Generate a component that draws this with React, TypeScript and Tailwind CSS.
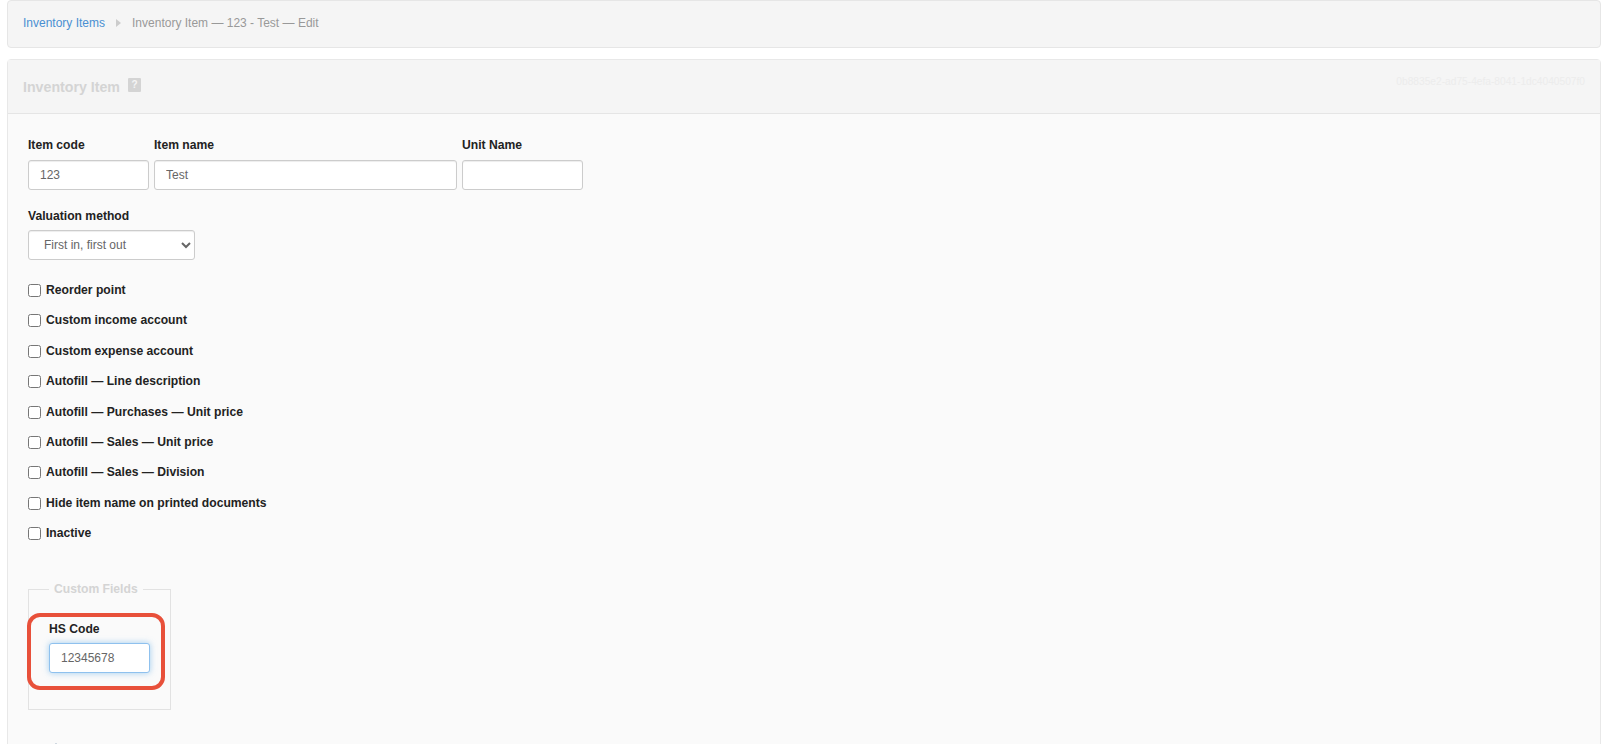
import React from "react";

const checks = [
  "Reorder point",
  "Custom income account",
  "Custom expense account",
  "Autofill — Line description",
  "Autofill — Purchases — Unit price",
  "Autofill — Sales — Unit price",
  "Autofill — Sales — Division",
  "Hide item name on printed documents",
  "Inactive",
];

const inputCls = "h-[30px] rounded-[3px] border bg-white px-[11px] text-[12px] text-[#666] outline-none";
const idleCls = "border-[#ccc] shadow-[inset_0_1px_1px_rgba(0,0,0,0.075)]";
const labelCls = "text-[12.15px] leading-[15px] font-bold text-[#222]";

const Field: React.FC<{ label: string; value: string; width: string }> = ({ label, value, width }) => (
  <div className={`flex flex-col ${width}`}>
    <label className={`mb-[7px] ${labelCls}`}>{label}</label>
    <input readOnly value={value} className={`${inputCls} ${idleCls} w-full`} />
  </div>
);

export default function App() {
  return (
    <div className="h-[744px] overflow-hidden bg-white pr-[18px] pl-[7px] font-['Liberation_Sans',Arial,sans-serif]">
      {/* Breadcrumb */}
      <div className="flex h-[48px] items-center rounded-[4px] border border-[#e6e6e6] bg-[#f5f5f5] pb-[2px] pl-[15px] text-[12px]">
        <a className="text-[#4a90d2]">Inventory Items</a>
        <span className="mx-[11px] h-0 w-0 border-y-[4px] border-l-[5px] border-y-transparent border-l-[#ccc]" />
        <span className="text-[#999]">Inventory Item — 123 - Test — Edit</span>
      </div>

      {/* Panel */}
      <div className="mt-[11px] h-[800px] rounded-t-[4px] border border-[#e8e8e8] bg-[#fafafa]">
        <div className="flex h-[54px] items-center justify-between border-b border-[#e5e5e5] bg-[#f5f5f5] px-[15px] pt-[2px]">
          <div className="flex items-center gap-[8px]">
            <span className="text-[14.2px] font-bold text-[#d4d4d4]">Inventory Item</span>
            <span className="mb-[5px] flex h-[14px] w-[13px] items-center justify-center rounded-[1px] bg-[#d4d4d4] text-[10px] leading-none font-bold text-[#f5f5f5]">
              ?
            </span>
          </div>
          <span className="mb-[11px] text-[10.2px] text-[#ececec]">0b8835e2-ad75-4efa-8041-1dc4040507f0</span>
        </div>

        <div className="pt-[24px] pl-[20px]">
          <div className="flex gap-[5px]">
            <Field label="Item code" value="123" width="w-[121px]" />
            <Field label="Item name" value="Test" width="w-[303px]" />
            <Field label="Unit Name" value="" width="w-[121px]" />
          </div>

          <div className="mt-[19px] flex flex-col">
            <label className={`mb-[6px] ${labelCls}`}>Valuation method</label>
            <select className={`${inputCls} ${idleCls} w-[167px]`} defaultValue="fifo">
              <option value="fifo">First in, first out</option>
            </select>
          </div>

          <div className="mt-[23px] flex flex-col gap-[15.4px]">
            {checks.map((c) => (
              <label key={c} className={`flex h-[15px] items-center gap-[5px] ${labelCls}`}>
                <input type="checkbox" className="m-0 h-[13px] w-[13px]" />
                {c}
              </label>
            ))}
          </div>

          <fieldset className="relative mt-[39px] h-[130px] w-[143px] border border-[#e2e2e2] pl-[20px]">
            <legend className="px-[5px] text-[12.15px] font-bold text-[#d4d4d4]">Custom Fields</legend>
            <div className="mt-[24px] flex w-[101px] flex-col">
              <label className={`mb-[6px] ${labelCls}`}>HS Code</label>
              <input
                readOnly
                value="12345678"
                className={`${inputCls} w-full border-[#8fc1ee] shadow-[0_0_6px_rgba(102,175,233,0.6)]`}
              />
            </div>
            {/* annotation highlight */}
            <div className="absolute top-[15px] left-[-2px] h-[77px] w-[138px] rounded-[13px] border-[4px] border-[#e8503a]" />
          </fieldset>

          <div className="mt-[33px] ml-[27px] h-[3px] w-[2px] bg-[#d0d8e0]" />
        </div>
      </div>
    </div>
  );
}
